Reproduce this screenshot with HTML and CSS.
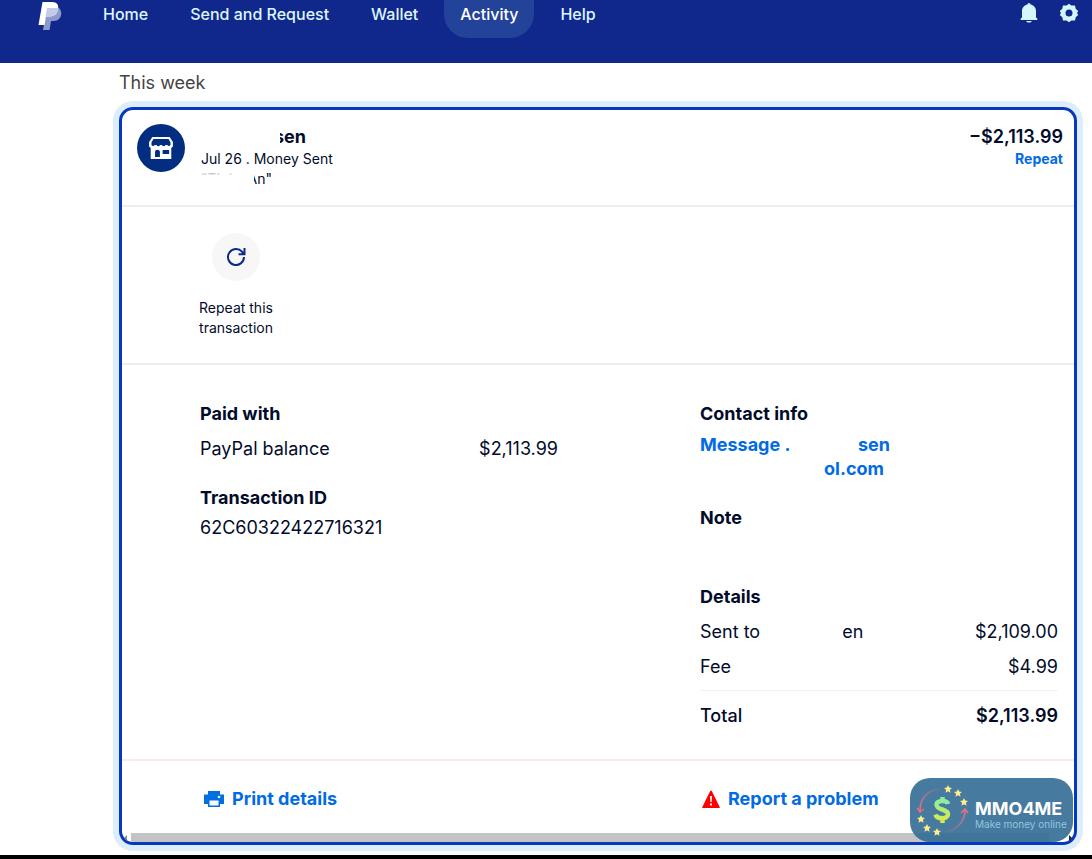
FILE: index.html
```html
<!DOCTYPE html>
<html lang="en">
<head>
<meta charset="utf-8">
<title>Activity</title>
<link rel="stylesheet" href="styles.css">
</head>
<body>
<header class="topbar">
  <a class="logo" href="#" aria-label="PayPal">
    <svg width="24" height="30" viewBox="0 0 24 30"><path fill="#8d99cb" d="M9 7h12c3 3 3 8 0 11-2 2-5 2-8 2l-1.500 9H5z"/><path fill="#fff" d="M4.500 1h9.500c5 0 7 3 6 7.500-1 5-4 7-9 7H8l-1.500 8.500H.5z"/><path fill="#c3cbe6" d="M9 7h11.200c.2 5.500-3.500 8.500-9.200 8.500H7.500z"/></svg>
  </a>
  <nav class="nav">
    <a href="#">Home</a>
    <a href="#">Send and Request</a>
    <a href="#">Wallet</a>
    <a class="active" href="#">Activity</a>
    <a href="#">Help</a>
  </nav>
  <div class="tools">
    <button aria-label="Notifications"><svg width="18" height="20" viewBox="0 0 18 20"><path fill="#d5f5ff" d="M9 0a1.500 1.500 0 0 1 1.500 1.500C14 2.200 16 5 16 8v6.500l1.300 1V17H.7v-1.500l1.300-1V8c0-3 2-5.800 5.500-6.500A1.500 1.500 0 0 1 9 0zM6.200 18h5.600c-.8 2-4.800 2-5.600 0z"/></svg></button>
    <button aria-label="Settings"><svg width="20" height="20" viewBox="0 0 20 20"><path fill="#d5f5ff" fill-rule="evenodd" d="M10 .8l2.400 1.800 3.600-.1.700 3.300 2.500 2.200L18 10l1.200 2-2.500 2.200-.7 3.300-3.600-.1L10 19.200l-2.400-1.800-3.600.1-.7-3.300L.8 12 2 10 .8 8l2.500-2.200L4 2.500l3.600.1zM10 6.500a3.500 3.500 0 1 0 0 7 3.500 3.500 0 0 0 0-7z"/></svg></button>
  </div>
</header>

<main class="page">
  <h1 class="period">This week</h1>
  <article class="card">
    <section class="summary">
      <div class="avatar"><svg width="26" height="24" viewBox="0 0 24 24" preserveAspectRatio="none"><path fill="#fff" fill-rule="evenodd" d="M4 1h16l3 5v4.500l-1.500 1.500V23h-19V12L1 10.500V6zM5 3L3.200 6.500V9c.7 1.200 2.300 1.200 3 0h1.600c.8 1.700 2.600 1.700 3.400 0h1.600c.8 1.700 2.600 1.700 3.400 0h1.600c.7 1.200 2.300 1.200 3 0V6.500L19 3zM6.500 21h4.500v-5c0-3-4.500-3-4.500 0zM13.500 14v4h6v-4z"/></svg></div>
      <div class="who">
        <h2 class="name"><span class="cut cut-name">sen</span></h2>
        <p>Jul 26 . Money Sent</p>
        <p class="memo"><span class="trace">"Th i</span><span class="cut cut-memo">An"</span></p>
      </div>
      <div class="amount">
        <strong>−$2,113.99</strong>
        <a href="#">Repeat</a>
      </div>
    </section>

    <section class="actions">
      <button class="repeat">
        <span class="circle"><svg width="20" height="20" viewBox="0 0 20 20" fill="none" stroke="#0b2c86" stroke-width="2"><path d="M18 10a8 8 0 1 1-2-5.300l1.500 1.800M18.500 1v6.300h-6"/></svg></span>
        <span>Repeat this transaction</span>
      </button>
    </section>

    <section class="details">
      <div class="col">
        <h3>Paid with</h3>
        <div class="row"><span>PayPal balance</span><span>$2,113.99</span></div>
        <h3 class="later">Transaction ID</h3>
        <p class="value">62C60322422716321</p>
      </div>
      <div class="col">
        <h3>Contact info</h3>
        <a class="contact" href="#"><span>Message .</span><span class="contact-end">sen</span></a>
        <a class="mail" href="#">ol.com</a>
        <h3 class="later">Note</h3>
        <h3 class="breakdown">Details</h3>
        <div class="row"><span class="recipient"><span>Sent to</span><span>en</span></span><span>$2,109.00</span></div>
        <div class="row"><span>Fee</span><span>$4.99</span></div>
        <div class="row total"><span>Total</span><strong>$2,113.99</strong></div>
      </div>
    </section>

    <section class="links">
      <a href="#"><svg width="20" height="16" viewBox="0 0 20 16"><path fill="#0070e0" d="M4 0h12v3.500h4V13h-4v3H4v-3H0V3.500h4z"/><path fill="#fff" d="M5.500 9.500h9v5h-9z"/><circle cx="15" cy="6" r="1.300" fill="#fff"/></svg>Print details</a>
      <a href="#"><svg width="18" height="18" viewBox="0 0 18 18"><path fill="#f00" d="M8 1.500q1-1.800 2 0L17.700 17q.3 1-.7 1H1q-1 0-.7-1z"/><path fill="#fff" d="M8 6h2l-.4 6H8.400zM8 13.500h2v2H8z"/></svg>Report a problem</a>
    </section>
    <div class="scroll"><i class="arrow"></i><div class="thumb"></div><i class="arrow right"></i></div>

    <aside class="brand">
      <svg width="56" height="60" viewBox="0 0 56 60">
        <defs>
          <linearGradient id="cash" gradientUnits="userSpaceOnUse" x1="0" y1="16" x2="0" y2="44"><stop offset="0" stop-color="#7eeeb0"/><stop offset="1" stop-color="#e6e93c"/></linearGradient>
          <linearGradient id="down" x1="1" y1="0" x2="0" y2="1"><stop offset="0" stop-color="#e5707f" stop-opacity=".1"/><stop offset="1" stop-color="#e5707f"/></linearGradient>
          <linearGradient id="up" x1="0" y1="1" x2="1" y2="0"><stop offset="0" stop-color="#e5707f" stop-opacity=".1"/><stop offset="1" stop-color="#e5707f"/></linearGradient>
          <path id="star" fill="#ffed8a" d="M0-4l1.200 2.600 2.800.3-2.100 1.900.6 2.900L0 2.300l-2.500 1.400.6-2.900L-4-1.100l2.800-.3z"/>
        </defs>
        <path d="M25 9C12 10 5 19 5 31" fill="none" stroke="url(#down)" stroke-width="1.800"/>
        <path d="M2 28l3 4 4-3M46 33l4-4 3 4" fill="none" stroke="#e5707f" stroke-width="1.500"/>
        <path d="M29 52c13-1 21-11 21-22" fill="none" stroke="url(#up)" stroke-width="1.800"/>
        <path d="M33 24c-1-4-11-4-11.500.5-.5 6 12 4 11.500 10-.5 5-11 5-12.500 0M27.500 17v5M27.500 37v6" fill="none" stroke="url(#cash)" stroke-width="4.500"/>
        <use href="#star" x="33" y="9"/><use href="#star" x="43" y="13"/><use href="#star" x="49" y="22"/><use href="#star" x="6" y="39"/><use href="#star" x="12" y="48"/><use href="#star" x="22" y="52"/>
      </svg>
      <div><b>MMO4ME</b><small>Make money online</small></div>
    </aside>
  </article>
</main>
<footer class="edge"></footer>
</body>
</html>
```
FILE: styles.css
```css
* { box-sizing: border-box; }
body { margin: 0; min-height: 100vh; display: flex; flex-direction: column; background: #fff; color: #020b2a; font: 18px/24px Inter, "Liberation Sans", sans-serif; }
h1, h2, h3, p { margin: 0; }
h2, h3 { font-size: 18px; font-weight: 700; }
a { color: #006be3; text-decoration: none; font-weight: 700; }
button { border: 0; padding: 0; background: none; color: inherit; font: inherit; }
svg { display: block; flex: none; }

.topbar { display: flex; align-items: flex-start; height: 63px; padding: 0 13px 0 38px; background: #10288b; }
.logo { padding-top: 1px; }
.nav { display: flex; gap: 10px; margin-left: 25px; }
.nav a { height: 38px; padding: 2px 16px 0; color: #dff6ff; font-size: 16px; font-weight: 500; }
.nav .active { background: #23429a; color: #fff; border-radius: 0 0 24px 24px; }
.tools { display: flex; gap: 21px; margin-left: auto; padding-top: 3px; }

.page { padding: 8px 15px 10px 119px; }
.period { font-size: 18px; font-weight: 400; color: #444; margin-bottom: 12px; }
.card { position: relative; border: 3px solid #0637bf; border-radius: 14px; box-shadow: 0 0 0 6px #dcedfd; }

.summary { display: flex; gap: 16px; padding: 14px 11px 16px 15px; border-bottom: 2px solid #f0ecee; font-size: 14px; line-height: 20px; }
.avatar { display: grid; place-items: center; flex: none; width: 48px; height: 48px; border-radius: 50%; background: #032d80; }
.name { height: 25px; line-height: 26px; padding-left: 79px; }
.cut { display: flex; justify-content: flex-end; overflow: hidden; }
.cut-name { width: 26px; }
.memo { display: flex; }
.trace { width: 53px; height: 6px; overflow: hidden; color: #ccc; }
.cut-memo { width: 18px; }
.amount { display: flex; flex-direction: column; align-items: flex-end; margin-left: auto; }
.amount strong { height: 25px; font-size: 18px; line-height: 26px; font-weight: 600; }

.actions { padding: 26px 77px 25px; border-bottom: 2px solid #f0ecee; }
.repeat { display: flex; flex-direction: column; align-items: center; gap: 17px; width: 74px; font-size: 14px; line-height: 20px; }
.circle { display: grid; place-items: center; width: 48px; height: 48px; border-radius: 50%; background: #f7f7f7; }

.details { display: grid; grid-template-columns: 1fr 1fr; gap: 142px; padding: 37px 16px 31px 78px; border-bottom: 2px solid #f6ebed; }
.row { display: flex; justify-content: space-between; margin-top: 11px; }
.later { margin-top: 25px; }
.value { margin-top: 6px; }
.contact { display: flex; margin-top: 7px; }
.contact-end { margin-left: auto; padding-right: 168px; }
.mail { display: block; padding-left: 124px; }
.breakdown { margin-top: 55px; }
.recipient { display: flex; gap: 82px; }
.total { padding-top: 13px; border-top: 1px solid #f5f1f2; font-weight: 500; }
.total strong { font-weight: 600; }

.links { display: grid; grid-template-columns: 1fr 1fr; gap: 142px; padding: 26px 16px 22px 82px; }
.links a { display: flex; align-items: center; gap: 8px; white-space: nowrap; }
.scroll { display: flex; align-items: center; gap: 4px; height: 9px; overflow: hidden; padding: 0 2px; border-radius: 0 0 11px 11px; }
.thumb { flex: 1; height: 9px; margin-right: 16px; background: #c3c3c3; }
.arrow { border: 3px solid transparent; border-left: 0; border-right-color: #888; }
.arrow.right { border-left: 3px solid #222; border-right: 0; }

.brand { position: absolute; right: 1px; bottom: 0; display: flex; align-items: center; gap: 4px; width: 163px; height: 64px; padding-left: 5px; border-radius: 20px; background: rgba(50, 107, 149, .9); color: #fff; }
.brand div { display: flex; flex-direction: column; padding-top: 10px; }
.brand b { font-size: 18px; line-height: 18px; }
.brand small { font-size: 10px; line-height: 12px; color: #8fc7df; white-space: nowrap; }
.edge { flex: 1; background: #000; }
```
